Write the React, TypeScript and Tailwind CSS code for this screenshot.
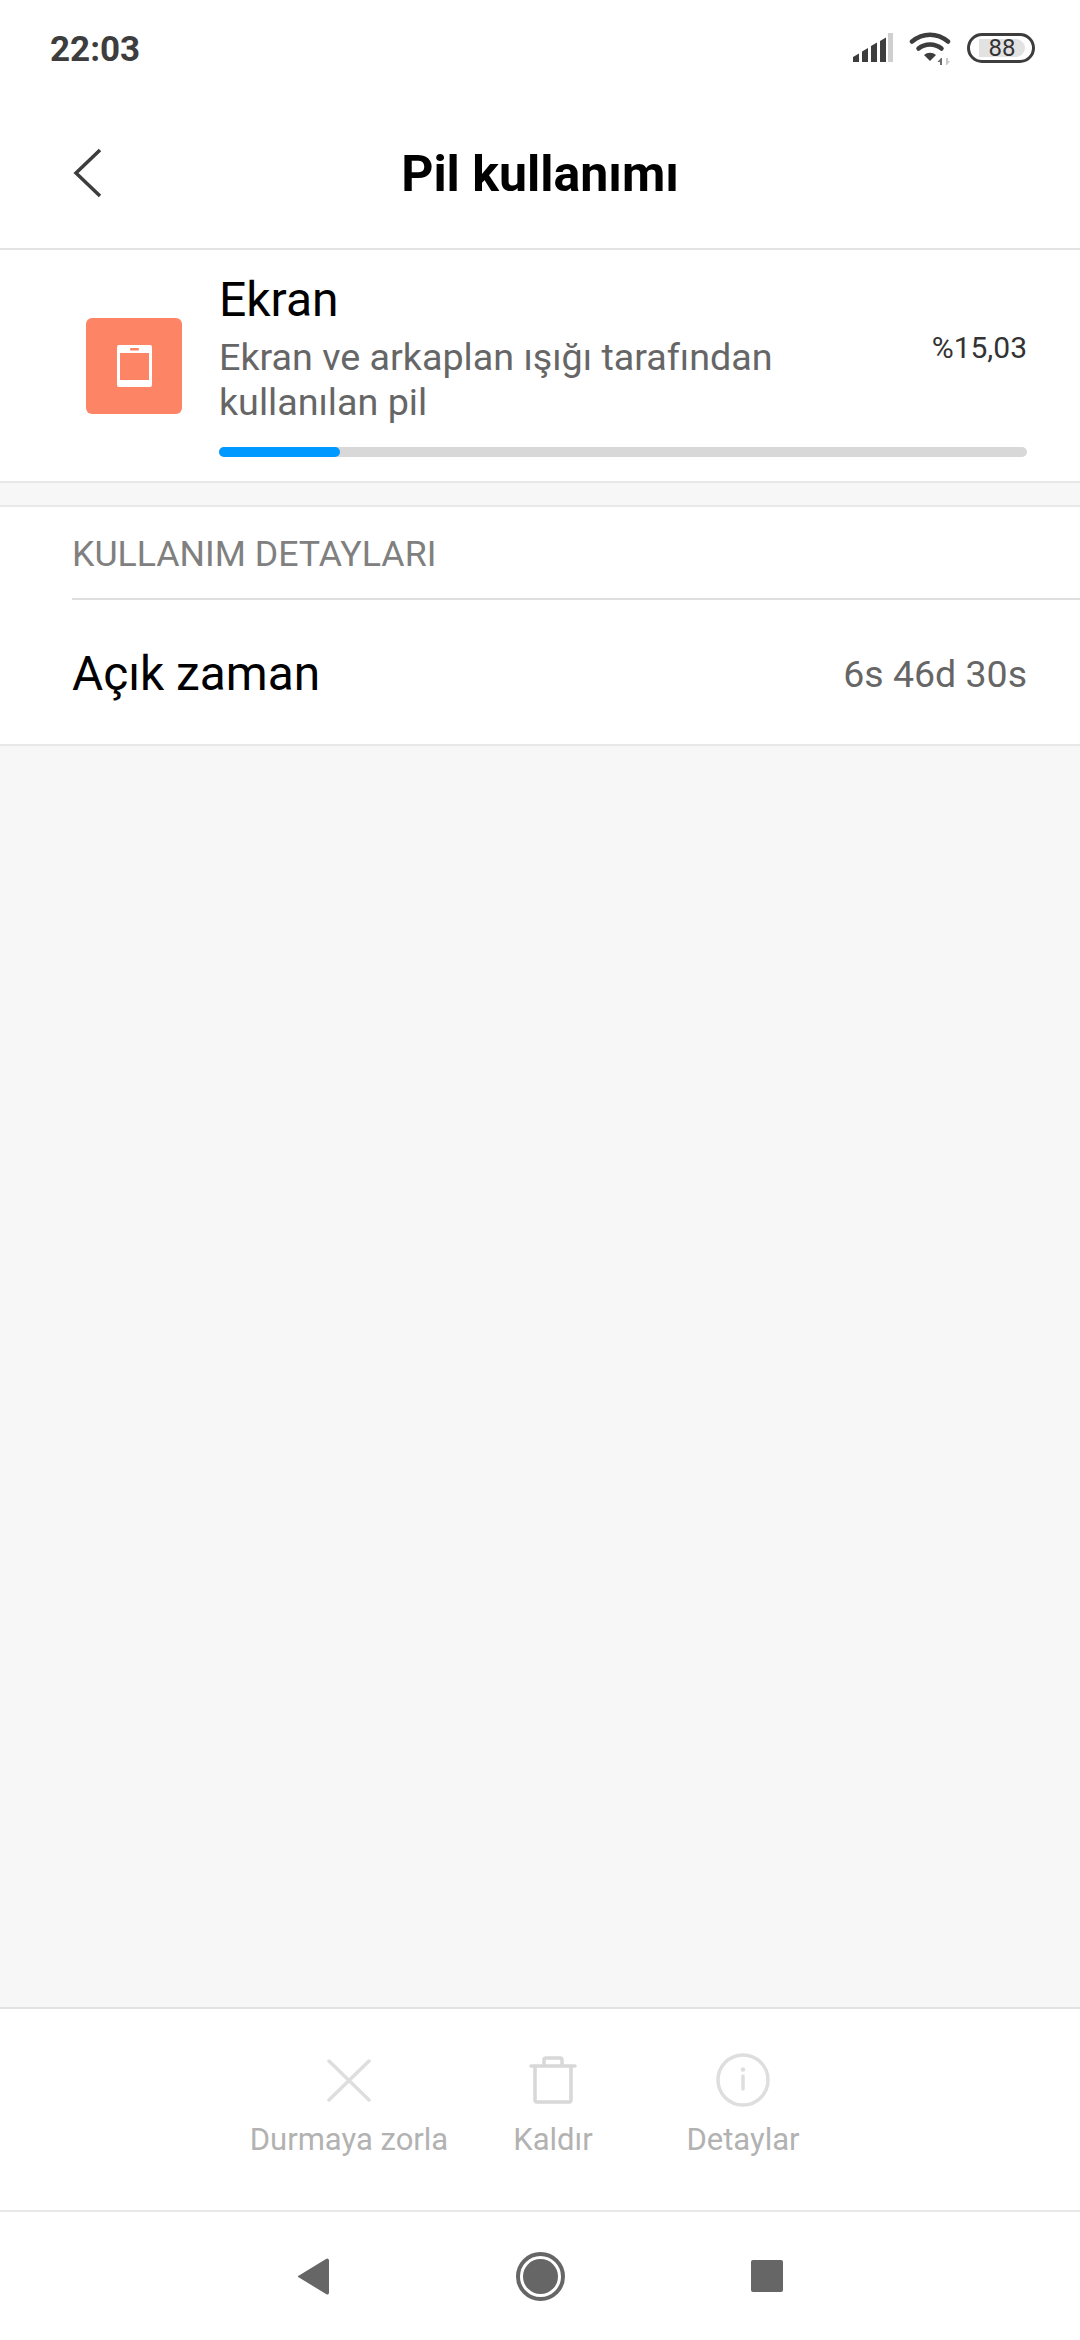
const font = { fontFamily: "Roboto, sans-serif" };

function StatusIcons() {
  return (
    <div className="flex items-center">
      {/* sinyal */}
      <svg width="40" height="30" viewBox="0 0 40 30" className="mr-[16px]">
        <path d="M0 29v-5l6-3.5V29z M9 29V18.5l6-3.5V29z M18 29V13l6-3.5V29z" fill="#3d3d3d" />
        <path d="M27 29V8l6-3.5V29z" fill="#3d3d3d" />
        <rect x="35" y="0" width="5" height="29" fill="#cfcfcf" />
      </svg>
      {/* wifi */}
      <svg width="44" height="34" viewBox="0 0 44 34" className="mr-[14px]">
        <g fill="none" stroke="#3d3d3d" strokeWidth="4.5" strokeLinecap="round">
          <path d="M3 10.5C14 1.5 28 1.5 39 10.5" />
          <path d="M9.5 17.5C16 12 26 12 32.5 17.5" />
        </g>
        <path d="M15 24a9 9 0 0 1 12 0l-6 6z" fill="#3d3d3d" />
        <path d="M32 27l-3.5 4h2.5v3h2v-7z" fill="#6b6b6b" />
        <path d="M38 34l3-4h-2v-3h-2v7z" fill="#c8c8c8" />
      </svg>
      {/* batarya */}
      <div className="w-[68px] h-[30px] rounded-full border-[3px] border-[#3d3d3d] p-[3px] flex">
        <div className="w-[46px] ml-[6px] h-full rounded-l-[3px] rounded-r-full bg-[#e2e2e2] flex items-center justify-center text-[24px] leading-none text-[#333333]">
          88
        </div>
      </div>
    </div>
  );
}

function PhoneIcon() {
  return (
    <svg width="35" height="42" viewBox="0 0 35 42">
      <rect x="0" y="0" width="35" height="42" rx="2" fill="#ffffff" />
      <rect x="3" y="8" width="29" height="27" fill="#fd8566" />
      <rect x="13" y="3" width="9" height="2.5" rx="1" fill="#fd8566" />
    </svg>
  );
}

function Accion({ label, width, children }: { label: string; width: string; children: React.ReactNode }) {
  return (
    <div className={`${width} flex flex-col items-center`}>
      <div className="h-[54px] flex items-center justify-center">{children}</div>
      <span className="mt-[13px] text-[31px] leading-[40px] text-[#b2b2b2]">{label}</span>
    </div>
  );
}

export default function App() {
  return (
    <div style={font} className="w-[1080px] h-[2340px] flex flex-col bg-[#f7f7f7] overflow-hidden">
      {/* Status bar */}
      <div className="h-[96px] bg-white flex items-center justify-between pl-[50px] pr-[45px]">
        <span className="text-[35px] font-bold text-[#3d3d3d] pt-[4px]">22:03</span>
        <StatusIcons />
      </div>

      {/* Başlık */}
      <div className="h-[154px] bg-white border-b-2 border-[#e3e3e3] relative flex items-center justify-center">
        <svg width="30" height="50" viewBox="0 0 30 50" className="absolute left-[72px] top-[52px]">
          <path d="M28 2L4 25l24 23" fill="none" stroke="#3d3d3d" strokeWidth="3.5" />
        </svg>
        <span className="text-[50px] font-bold text-black pt-[5px]">Pil kullanımı</span>
      </div>

      {/* Ekran */}
      <div className="h-[233px] bg-white border-b-2 border-[#e8e8e8] flex pl-[86px] pr-[53px]">
        <div className="w-[96px] h-[96px] mt-[68px] rounded-[6px] bg-[#fd8566] flex items-center justify-center shrink-0">
          <PhoneIcon />
        </div>
        <div className="flex-1 ml-[37px] pt-[23px]">
          <div className="text-[48px] leading-[54px] text-black">Ekran</div>
          <div className="flex justify-between mt-[8px]">
            <div className="text-[37.7px] leading-[45px] text-[#666666] w-[640px]">Ekran ve arkaplan ışığı tarafından kullanılan pil</div>
            <div className="text-[30px] leading-[40px] text-[#333333] -mt-[7px]">%15,03</div>
          </div>
          <div className="mt-[22px] h-[10px] rounded-full bg-[#d8d8d8]">
            <div className="w-[15%] h-full rounded-full bg-[#0099ff]" />
          </div>
        </div>
      </div>

      <div className="h-[22px]" />

      {/* Kullanım detayları */}
      <div className="bg-white border-y-2 border-[#e8e8e8]">
        <div className="ml-[72px] h-[93px] border-b-2 border-[#dedede] flex items-center pt-[5px]">
          <span className="text-[35.7px] text-[#808080]">KULLANIM DETAYLARI</span>
        </div>
        <div className="h-[144px] flex items-center justify-between pl-[72px] pr-[53px] pt-[5px]">
          <span className="text-[47.8px] text-black">Açık zaman</span>
          <span className="text-[37.5px] text-[#666666]">6s 46d 30s</span>
        </div>
      </div>

      <div className="flex-1" />

      {/* Alt eylemler */}
      <div className="h-[203px] bg-white border-t-2 border-[#e3e3e3] flex justify-center pt-[44px] pr-[2px]">
        <Accion label="Durmaya zorla" width="w-[240px]">
          <svg width="44" height="43" viewBox="0 0 44 43" fill="none" stroke="#dedede" strokeWidth="3.5" strokeLinecap="round">
            <path d="M2 2l40 39M42 2L2 41" />
          </svg>
        </Accion>
        <Accion label="Kaldır" width="w-[168px]">
          <svg width="48" height="48" viewBox="0 0 48 48" fill="none" stroke="#d8d8d8" strokeWidth="3.5" strokeLinejoin="round" strokeLinecap="round">
            <path d="M2 10h44M6 10v34a2 2 0 0 0 2 2h32a2 2 0 0 0 2-2V10M15 10V4a2 2 0 0 1 2-2h14a2 2 0 0 1 2 2v6" />
          </svg>
        </Accion>
        <Accion label="Detaylar" width="w-[212px]">
          <svg width="54" height="54" viewBox="0 0 54 54" fill="none" stroke="#dedede" strokeWidth="3.5">
            <circle cx="27" cy="27" r="25" />
            <circle cx="27" cy="16.5" r="2.2" fill="#dedede" stroke="none" />
            <path d="M27 23v13" strokeLinecap="round" />
          </svg>
        </Accion>
      </div>

      {/* Navigasyon çubuğu */}
      <div className="h-[130px] bg-white border-t-2 border-[#e8e8e8] flex items-center justify-center">
        <div className="flex items-center gap-[186px] pr-[1px]">
          <svg width="33" height="37" viewBox="0 0 33 37">
            <path d="M29 1L2 17.5a1 1 0 0 0 0 2L29 36a2 2 0 0 0 3-1V2a2 2 0 0 0-3-1z" fill="#666666" />
          </svg>
          <div className="w-[49px] h-[49px] rounded-full border-[4px] border-[#666666] p-[3px]">
            <div className="w-full h-full rounded-full bg-[#666666]" />
          </div>
          <div className="w-[32px] h-[32px] rounded-[2px] bg-[#666666]" />
        </div>
      </div>
    </div>
  );
}
